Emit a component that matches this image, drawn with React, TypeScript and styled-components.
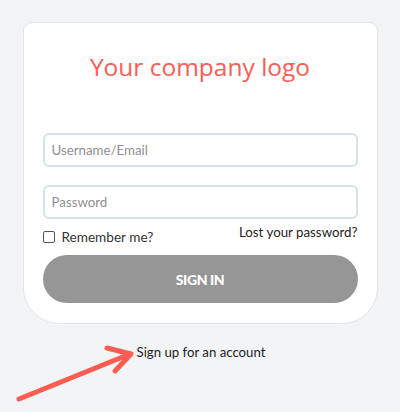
import React from 'react';
import styled, { createGlobalStyle } from 'styled-components';

const GlobalStyle = createGlobalStyle`
  html, body {
    margin: 0;
    padding: 0;
    background: #f3f4f6;
  }
  body {
    font-family: 'Lato', 'Liberation Sans', sans-serif;
  }
`;

const Page = styled.div`
  width: 400px;
  height: 412px;
  box-sizing: border-box;
  padding-top: 22px;
  display: flex;
  flex-direction: column;
  align-items: center;
  overflow: hidden;
`;

const Card = styled.form`
  width: 355px;
  height: 302px;
  box-sizing: border-box;
  background: #ffffff;
  border: 1px solid #e3e5e8;
  border-radius: 9px 9px 36px 36px;
  padding: 26px 19px 0 19px;
  display: flex;
  flex-direction: column;
`;

const Logo = styled.h1`
  margin: 0;
  height: 36px;
  font-family: 'Open Sans', 'Liberation Sans', sans-serif;
  font-weight: 400;
  font-size: 24.5px;
  line-height: 36px;
  color: #fc5c52;
  text-align: center;
`;

const Field = styled.input<{ $gap: number }>`
  display: block;
  width: 100%;
  height: 34px;
  box-sizing: border-box;
  border: 2px solid #d6e1ea;
  border-radius: 6px;
  padding: 0 7px;
  font-family: 'Lato', 'Liberation Sans', sans-serif;
  font-size: 13.3px;
  color: #333;
  outline: none;
  margin-top: ${p => p.$gap}px;
  &::placeholder {
    color: #909090;
  }
`;

const OptionsRow = styled.div`
  display: flex;
  justify-content: space-between;
  align-items: flex-start;
  margin-top: 4px;
  height: 32px;
`;

const Remember = styled.label`
  display: flex;
  align-items: center;
  gap: 7px;
  margin-top: 6px;
  font-size: 13.6px;
  color: #333;
`;

const Box = styled.span`
  width: 12px;
  height: 12px;
  border: 1px solid #555;
  border-radius: 2px;
  box-sizing: border-box;
`;

const LostLink = styled.a`
  font-size: 13.3px;
  color: #222;
  text-decoration: none;
  margin-top: 1px;
`;

const SignInButton = styled.button`
  width: 100%;
  height: 48px;
  border: none;
  border-radius: 24px;
  background: #969696;
  color: #ffffff;
  font-family: 'Lato', 'Liberation Sans', sans-serif;
  font-weight: 900;
  font-size: 14px;
  letter-spacing: -0.4px;
`;

const Footer = styled.div`
  position: relative;
  width: 400px;
  flex: 1;
  display: flex;
  justify-content: center;
  padding-top: 20px;
  box-sizing: border-box;
`;

const SignUp = styled.a`
  font-size: 13.2px;
  color: #222;
  text-decoration: none;
  height: 18px;
  margin-left: 2px;
`;

const Arrow = styled.svg`
  position: absolute;
  left: 0;
  top: 0;
`;

export default function App() {
  return (
    <>
      <GlobalStyle />
      <Page>
        <Card onSubmit={e => e.preventDefault()}>
          <Logo>Your company logo</Logo>
          <Field placeholder="Username/Email" $gap={48} />
          <Field placeholder="Password" type="password" $gap={18} />
          <OptionsRow>
            <Remember>
              <Box />
              Remember me?
            </Remember>
            <LostLink href="#">Lost your password?</LostLink>
          </OptionsRow>
          <SignInButton type="submit">SIGN IN</SignInButton>
        </Card>
        <Footer>
          <SignUp href="#">Sign up for an account</SignUp>
          <Arrow width="400" height="90" viewBox="0 0 400 90">
            <g stroke="#fc5c52" strokeWidth="5" strokeLinecap="round" strokeLinejoin="round" fill="none">
              <path d="M19 75 L130 30" />
              <path d="M107 24 L131 30 L115 47" />
            </g>
          </Arrow>
        </Footer>
      </Page>
    </>
  );
}
